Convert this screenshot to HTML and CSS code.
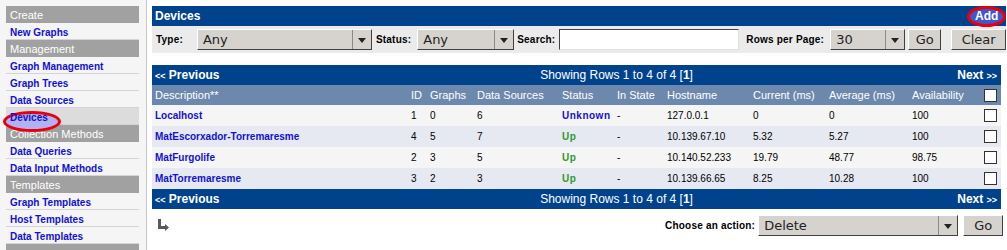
FILE: index.html
```html
<!DOCTYPE html>
<html lang="en">
<head>
    <meta charset="UTF-8">
    <title>Devices</title>
    <link rel="stylesheet" href="styles.css">
</head>
<body>
<div class="page">
    <!-- left menu -->
    <nav class="menu">
        <div class="menu-head">Create</div>
        <a class="menu-item" href="#">New Graphs</a>
        <div class="menu-head">Management</div>
        <a class="menu-item" href="#">Graph Management</a>
        <a class="menu-item" href="#">Graph Trees</a>
        <a class="menu-item" href="#">Data Sources</a>
        <a class="menu-item selected" href="#"><span class="circled">Devices</span></a>
        <div class="menu-head">Collection Methods</div>
        <a class="menu-item" href="#">Data Queries</a>
        <a class="menu-item" href="#">Data Input Methods</a>
        <div class="menu-head">Templates</div>
        <a class="menu-item" href="#">Graph Templates</a>
        <a class="menu-item" href="#">Host Templates</a>
        <a class="menu-item" href="#">Data Templates</a>
        <div class="menu-head"></div>
    </nav>

    <main class="content">
        <div class="title-bar">
            <span>Devices</span>
            <a class="add-link" href="#">Add</a>
        </div>

        <form class="filter">
            <label>Type:</label>
            <span class="combo w-type"><select><option>Any</option></select><i></i></span>
            <label>Status:</label>
            <span class="combo w-status"><select><option>Any</option></select><i></i></span>
            <label>Search:</label>
            <input class="search" type="text">
            <label>Rows per Page:</label>
            <span class="combo w-rows"><select><option>30</option></select><i></i></span>
            <button type="button" class="btn go">Go</button>
            <button type="button" class="btn clear">Clear</button>
        </form>

        <table class="devices">
            <colgroup>
                <col style="width:256px"><col style="width:19px"><col style="width:47px">
                <col style="width:85px"><col style="width:55px"><col style="width:50px">
                <col style="width:86px"><col style="width:76px"><col style="width:83px">
                <col style="width:71px"><col style="width:21px">
            </colgroup>
            <tr class="nav">
                <td colspan="11">
                    <div class="nav-inner">
                        <span class="prev"><small>&lt;&lt;</small> Previous</span>
                        <span class="showing">Showing Rows 1 to 4 of 4 [<b>1</b>]</span>
                        <span class="next">Next <small>&gt;&gt;</small></span>
                    </div>
                </td>
            </tr>
            <tr class="head">
                <td>Description**</td><td>ID</td><td>Graphs</td><td>Data Sources</td><td>Status</td>
                <td>In State</td><td>Hostname</td><td>Current (ms)</td><td>Average (ms)</td>
                <td>Availability</td><td class="chk"><span class="box"></span></td>
            </tr>
            <tr class="odd">
                <td><a href="#">Localhost</a></td><td>1</td><td>0</td><td>6</td>
                <td class="unknown">Unknown</td><td>-</td><td>127.0.0.1</td><td>0</td><td>0</td>
                <td>100</td><td class="chk"><span class="box"></span></td>
            </tr>
            <tr class="even">
                <td><a href="#">MatEscorxador-Torremaresme</a></td><td>4</td><td>5</td><td>7</td>
                <td class="up">Up</td><td>-</td><td>10.139.67.10</td><td>5.32</td><td>5.27</td>
                <td>100</td><td class="chk"><span class="box"></span></td>
            </tr>
            <tr class="odd">
                <td><a href="#">MatFurgolife</a></td><td>2</td><td>3</td><td>5</td>
                <td class="up">Up</td><td>-</td><td>10.140.52.233</td><td>19.79</td><td>48.77</td>
                <td>98.75</td><td class="chk"><span class="box"></span></td>
            </tr>
            <tr class="even">
                <td><a href="#">MatTorremaresme</a></td><td>3</td><td>2</td><td>3</td>
                <td class="up">Up</td><td>-</td><td>10.139.66.65</td><td>8.25</td><td>10.28</td>
                <td>100</td><td class="chk"><span class="box"></span></td>
            </tr>
            <tr class="nav">
                <td colspan="11">
                    <div class="nav-inner">
                        <span class="prev"><small>&lt;&lt;</small> Previous</span>
                        <span class="showing">Showing Rows 1 to 4 of 4 [<b>1</b>]</span>
                        <span class="next">Next <small>&gt;&gt;</small></span>
                    </div>
                </td>
            </tr>
        </table>

        <div class="actions">
            <svg class="arrow" width="13" height="12" viewBox="0 0 13 12">
                <path d="M1 0h3v7h4V5l4 3.5-4 3.5v-2H1z" fill="#5a5a5a"/>
            </svg>
            <label>Choose an action:</label>
            <span class="combo w-action"><select><option>Delete</option></select><i></i></span>
            <button type="button" class="btn go2">Go</button>
        </div>
    </main>
</div>
</body>
</html>
```

FILE: styles.css
```css
body {
    margin: 0;
    font-family: 'Liberation Sans', Arial, sans-serif;
    font-size: 10px;
    background: #fff;
}

.page {
    display: flex;
    height: 250px;
    overflow: hidden;
}

/* left menu */
.menu {
    width: 133px;
    flex: none;
    padding: 6px 7px 0 6px;
    background: #f5f5f5;
    border-right: 1px solid #c8c8c8;
    display: flex;
    flex-direction: column;
}

.menu-head {
    flex: none;
    height: 16px;
    line-height: 17px;
    padding: 1px 0 0 4px;
    background: #a1a1a1;
    color: #fff;
    font-size: 11px;
}

.menu-item {
    position: relative;
    height: 15px;
    line-height: 17px;
    padding: 1px 0 0 4px;
    border-bottom: 1px solid #d4d4d4;
    color: #1111d4;
    font-weight: bold;
    font-size: 10px;
    text-decoration: none;
}

.menu-item.selected {
    background: #dcdcdc;
}

.circled {
    position: relative;
    z-index: 1;
}

.circled::before {
    content: "";
    position: absolute;
    left: -7px;
    top: -1px;
    width: 52px;
    height: 15px;
    border: 3px solid #e8000b;
    border-radius: 50%;
    background: #b2b2f2;
    z-index: -1;
}

/* main part */
.content {
    flex: 1;
    padding: 6px 6px 0 5px;
}

.title-bar {
    height: 20px;
    background: #00438c;
    color: #fff;
    font-size: 12px;
    font-weight: bold;
    display: flex;
    align-items: center;
    justify-content: space-between;
    padding-left: 3px;
}

.add-link {
    display: inline-block;
    width: 33px;
    height: 15px;
    line-height: 15px;
    text-align: center;
    border: 3px solid #e8000b;
    border-radius: 50%;
    background: #4157cb;
    color: #fff;
    text-decoration: none;
    font-size: 12px;
}

.filter {
    height: 27px;
    margin: 0;
    background: #ebebeb;
    display: flex;
    align-items: center;
    padding-left: 4px;
}

.filter label, .actions label {
    font-weight: bold;
    font-size: 10px;
    color: #000;
    white-space: nowrap;
    letter-spacing: 0.2px;
}

.combo {
    position: relative;
    display: inline-block;
    flex: none;
    height: 21px;
    box-sizing: border-box;
    background: #d6d3ce;
    border-top: 1px solid #fff;
    border-left: 1px solid #fff;
    border-right: 1px solid #404040;
    border-bottom: 1px solid #404040;
}

.combo select {
    -webkit-appearance: none;
    appearance: none;
    border: none;
    background: transparent;
    width: 100%;
    height: 19px;
    padding: 0 0 0 5px;
    font-family: 'DejaVu Sans', sans-serif;
    font-size: 13px;
    color: #222;
    outline: none;
}

/* arrow part of the drop-down */
.combo i {
    position: absolute;
    right: 0;
    top: 0;
    width: 18px;
    height: 19px;
    border-left: 1px solid #8a8a8a;
}

.combo i::after {
    content: "";
    position: absolute;
    left: 5px;
    top: 8px;
    border-left: 4px solid transparent;
    border-right: 4px solid transparent;
    border-top: 5px solid #222;
}

.w-type { width: 175px; margin: 0 4px 0 14px; }
.w-status { width: 97px; margin: 0 3px 0 6px; }
.w-rows { width: 75px; margin: 0 3px 0 6px; }
.w-action { width: 200px; margin: 0 5px 0 3px; }

.search {
    width: 180px;
    height: 21px;
    box-sizing: border-box;
    margin: 0 7px 0 4px;
    border-top: 1px solid #404040;
    border-left: 1px solid #404040;
    border-right: 1px solid #e0e0e0;
    border-bottom: 1px solid #e0e0e0;
    background: #fff;
    padding: 0;
}

.btn {
    height: 21px;
    box-sizing: border-box;
    background: #d6d3ce;
    border-top: 1px solid #fff;
    border-left: 1px solid #fff;
    border-right: 1px solid #404040;
    border-bottom: 1px solid #404040;
    font-family: 'DejaVu Sans', sans-serif;
    font-size: 13px;
    color: #222;
    padding: 0;
}

.btn.go { width: 33px; }
.btn.clear { width: 55px; margin-left: 10px; }
.btn.go2 { width: 40px; }

/* device table */
.devices {
    width: 849px;
    margin-top: 12px;
    border-collapse: collapse;
    table-layout: fixed;
}

.devices td {
    padding: 0 0 0 3px;
    white-space: nowrap;
    font-size: 10px;
    color: #000;
}

.devices tr.nav td {
    height: 20px;
    background: #00438c;
    color: #fff;
    padding: 0 4px 0 3px;
}

.nav-inner {
    display: flex;
    align-items: center;
}

.prev, .next {
    font-size: 12px;
    font-weight: bold;
}

.prev { width: 200px; }
.next { width: 119px; text-align: right; }

.prev small, .next small {
    font-size: 9px;
}

.showing {
    flex: 1;
    text-align: center;
    font-size: 12px;
}

.devices tr.head td {
    height: 20px;
    background: #6d88ad;
    color: #fff;
    font-size: 11px;
}

.devices tr.odd td, .devices tr.even td {
    height: 21px;
}

.devices tr.odd td { background: #f5f5f5; }
.devices tr.even td { background: #e7e9f2; }

.devices a {
    color: #1111d4;
    font-weight: bold;
    text-decoration: none;
}

.devices td.unknown {
    color: #1111d4;
    font-weight: bold;
    letter-spacing: 0.5px;
}

.devices td.up {
    color: #2e9a2e;
    font-weight: bold;
    letter-spacing: 0.5px;
}

.devices td.chk {
    text-align: right;
    padding-right: 4px;
}

.box {
    display: inline-block;
    width: 11px;
    height: 11px;
    border: 1px solid #333;
    background: #fff;
    vertical-align: middle;
}

.actions {
    display: flex;
    align-items: center;
    height: 28px;
    margin-top: 2px;
    padding-right: 3px;
}

.arrow {
    margin: 0 0 0 5px;
}

.actions label {
    margin-left: auto;
}
```
